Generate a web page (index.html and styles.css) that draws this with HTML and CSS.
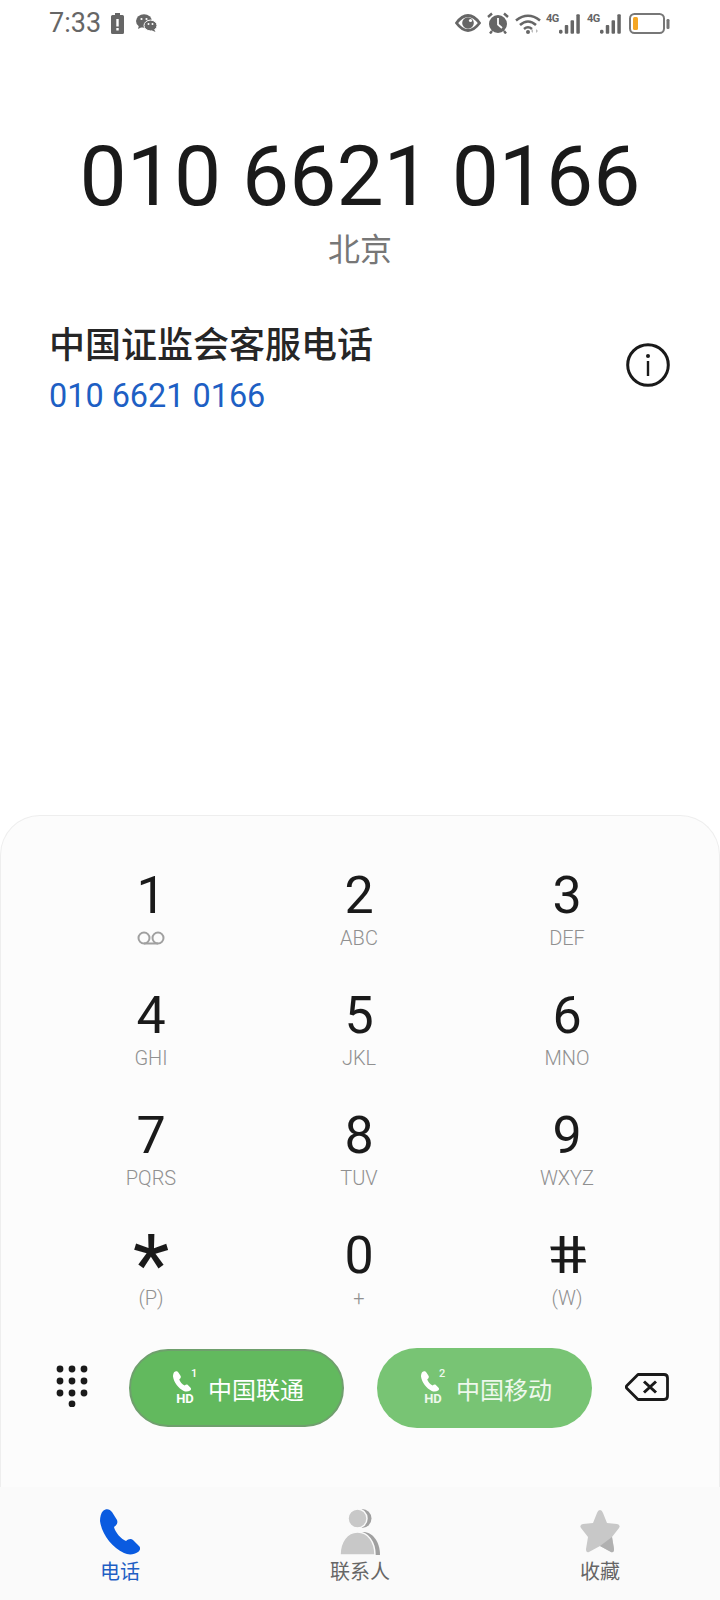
FILE: index.html
```html
<!DOCTYPE html>
<html>
<head>
    <title>Dialer</title>
    <link rel="stylesheet" href="styles.css">
</head>
<body>
    <div class="screen">
        <div class="status-bar">
            <div class="status-left">
                <span class="time">7:33</span>
                <svg class="ico-charge" viewBox="0 0 13 21"><path d="M4 0h5v2h2.500q1.500 0 1.500 1.500V19.500q0 1.500-1.500 1.500h-10Q0 21 0 19.500V3.500Q0 2 1.500 2H4z" fill="#666"/><rect x="5.300" y="6" width="2.400" height="7.500" fill="#fff"/><rect x="5.300" y="15" width="2.400" height="2.500" fill="#fff"/></svg>
                <svg class="ico-wechat" viewBox="0 0 21 18"><ellipse cx="8" cy="7" rx="8" ry="6.800" fill="#666"/><path d="M3 11l-1 4 5-2.500z" fill="#666"/><ellipse cx="14.500" cy="11.500" rx="6.500" ry="5.400" fill="#666" stroke="#fff" stroke-width="1"/><path d="M18 15l1.500 3-4.500-2z" fill="#666"/><circle cx="5.500" cy="5" r="1.100" fill="#fff"/><circle cx="10.500" cy="5" r="1.100" fill="#fff"/><circle cx="12.500" cy="10" r="1" fill="#fff"/><circle cx="16.500" cy="10" r="1" fill="#fff"/></svg>
            </div>
            <div class="status-right">
                <svg class="ico-eye" viewBox="0 0 26 18"><path d="M1.500 9Q7 1.500 13 1.500T24.500 9Q19 16.500 13 16.500T1.500 9z" fill="none" stroke="#666" stroke-width="2.800"/><circle cx="13" cy="9" r="5.800" fill="#666"/><circle cx="15.500" cy="6.500" r="1.600" fill="#fff"/></svg>
                <svg class="ico-alarm" viewBox="0 0 22 22"><circle cx="11" cy="12" r="9" fill="#666"/><path d="M11 6v6.500l4 3.500" fill="none" stroke="#fff" stroke-width="1.800"/><path d="M1 5l4-3.500M21 5l-4-3.500M5 19l-2 2.500M17 19l2 2.500" stroke="#666" stroke-width="2.400" fill="none"/></svg>
                <svg class="ico-wifi" viewBox="0 0 26 21"><path d="M1 7.500Q13-2 25 7.500" fill="none" stroke="#666" stroke-width="2.600"/><path d="M5 12Q13 5 21 12" fill="none" stroke="#666" stroke-width="2.600"/><path d="M9 16q4-3.500 8 0" fill="none" stroke="#666" stroke-width="2.400"/><circle cx="13" cy="19" r="2" fill="#666"/><path d="M18 16l-2 2 2 2zM21 16l2 2-2 2z" fill="#bbb"/></svg>
                <div class="signal">
                    <span class="net">4G</span>
                    <svg class="ico-bars" viewBox="0 0 22 20"><rect x="0" y="16" width="3.600" height="4" rx="1.500" fill="#666"/><rect x="6" y="11" width="3.600" height="9" rx="1" fill="#666"/><rect x="12" y="6" width="3.600" height="14" rx="1" fill="#666"/><rect x="18" y="0" width="3.600" height="20" rx="1" fill="#666"/></svg>
                </div>
                <div class="signal">
                    <span class="net">4G</span>
                    <svg class="ico-bars" viewBox="0 0 22 20"><rect x="0" y="16" width="3.600" height="4" rx="1.500" fill="#666"/><rect x="6" y="11" width="3.600" height="9" rx="1" fill="#666"/><rect x="12" y="6" width="3.600" height="14" rx="1" fill="#666"/><rect x="18" y="0" width="3.600" height="20" rx="1" fill="#666"/></svg>
                </div>
                <svg class="ico-battery" viewBox="0 0 41 21"><rect x="1" y="1" width="34" height="19" rx="4.500" fill="none" stroke="#777" stroke-width="2"/><rect x="4" y="4" width="5" height="13" rx="1.500" fill="#f5a623"/><rect x="37.500" y="6" width="3" height="10" rx="1.200" fill="#777"/></svg>
            </div>
        </div>

        <div class="number-box">
            <div class="number">010 6621 0166</div>
            <div class="region">北京</div>
        </div>

        <div class="contact">
            <div>
                <div class="contact-name">中国证监会客服电话</div>
                <div class="contact-number">010 6621 0166</div>
            </div>
            <svg class="ico-info" viewBox="0 0 44 44"><circle cx="22" cy="22" r="20.300" fill="none" stroke="#1a1a1a" stroke-width="3"/><circle cx="22" cy="13" r="2" fill="#1a1a1a"/><rect x="20.800" y="18" width="2.400" height="15" fill="#1a1a1a"/></svg>
        </div>

        <div class="panel">
            <div class="keypad">
                <div class="key"><span class="digit">1</span><svg class="ico-voicemail" viewBox="0 0 28 14"><circle cx="7" cy="7" r="5.500" fill="none" stroke="#a0a0a0" stroke-width="2"/><circle cx="21" cy="7" r="5.500" fill="none" stroke="#a0a0a0" stroke-width="2"/><path d="M7 12.500h14" stroke="#a0a0a0" stroke-width="2"/></svg></div>
                <div class="key"><span class="digit">2</span><span class="sub">ABC</span></div>
                <div class="key"><span class="digit">3</span><span class="sub">DEF</span></div>
                <div class="key"><span class="digit">4</span><span class="sub">GHI</span></div>
                <div class="key"><span class="digit">5</span><span class="sub">JKL</span></div>
                <div class="key"><span class="digit">6</span><span class="sub">MNO</span></div>
                <div class="key"><span class="digit">7</span><span class="sub">PQRS</span></div>
                <div class="key"><span class="digit">8</span><span class="sub">TUV</span></div>
                <div class="key"><span class="digit">9</span><span class="sub">WXYZ</span></div>
                <div class="key"><span class="digit star">*</span><span class="sub">(P)</span></div>
                <div class="key"><span class="digit">0</span><span class="sub">+</span></div>
                <div class="key"><span class="digit hash">#</span><span class="sub">(W)</span></div>
            </div>

            <div class="actions">
                <svg class="ico-dots" viewBox="0 0 32 42"><g fill="#1a1a1a"><circle cx="4" cy="4" r="3.400"/><circle cx="16" cy="4" r="3.400"/><circle cx="28" cy="4" r="3.400"/><circle cx="4" cy="16" r="3.400"/><circle cx="16" cy="16" r="3.400"/><circle cx="28" cy="16" r="3.400"/><circle cx="4" cy="28" r="3.400"/><circle cx="16" cy="28" r="3.400"/><circle cx="28" cy="28" r="3.400"/><circle cx="16" cy="39" r="3.400"/></g></svg>
                <button class="call call-1">
                    <span class="hd">
                        <span class="hd-top"><svg class="ico-handset" viewBox="0 0 40 46"><path d="M3 2C6-1 10 0 12 3L17 11C18 14 17 16 14 18C15 23 21 30 26 32C28 30 31 29 33 31L39 37C41 39 40 42 38 43C34 46 28 46 24 44C12 38 2 26 0 12C0 8 1 4 3 2Z" fill="#fff"/></svg><span class="sim">1</span></span>
                        <span class="hd-label">HD</span>
                    </span>
                    <span>中国联通</span>
                </button>
                <button class="call call-2">
                    <span class="hd">
                        <span class="hd-top"><svg class="ico-handset" viewBox="0 0 40 46"><path d="M3 2C6-1 10 0 12 3L17 11C18 14 17 16 14 18C15 23 21 30 26 32C28 30 31 29 33 31L39 37C41 39 40 42 38 43C34 46 28 46 24 44C12 38 2 26 0 12C0 8 1 4 3 2Z" fill="#fff"/></svg><span class="sim">2</span></span>
                        <span class="hd-label">HD</span>
                    </span>
                    <span>中国移动</span>
                </button>
                <svg class="ico-del" viewBox="0 0 44 28"><path d="M13 1.500H39Q42.500 1.500 42.500 5V23Q42.500 26.500 39 26.500H13L2 15.500Q0.500 14 2 12.500Z" fill="none" stroke="#1a1a1a" stroke-width="2.800" stroke-linejoin="round"/><path d="M19 8.500l12 11M31 8.500l-12 11" stroke="#1a1a1a" stroke-width="3"/></svg>
            </div>
        </div>

        <div class="tabs">
            <div class="tab tab-active">
                <svg class="ico-tab" viewBox="0 0 40 46"><path d="M3 2C6-1 10 0 12 3L17 11C18 14 17 16 14 18C15 23 21 30 26 32C28 30 31 29 33 31L39 37C41 39 40 42 38 43C34 46 28 46 24 44C12 38 2 26 0 12C0 8 1 4 3 2Z" fill="#0a5be0"/></svg>
                <span>电话</span>
            </div>
            <div class="tab">
                <svg class="ico-tab" viewBox="0 0 40 46"><circle cx="22" cy="9.500" r="9.500" fill="#a0a0a0"/><path d="M6 46C6 33 13 23 23 23S40 33 40 46z" fill="#a0a0a0"/><circle cx="17.500" cy="9.500" r="9.500" fill="#c8c8c8" stroke="#fafafa" stroke-width="1.500"/><path d="M0 46C0 33 7 23 17.500 23S35 33 35 46z" fill="#c8c8c8" stroke="#fafafa" stroke-width="1.500"/></svg>
                <span>联系人</span>
            </div>
            <div class="tab">
                <svg class="ico-tab" viewBox="0 0 40 46"><path d="M20 1Q22 1 23 4L27 14 37 15Q41 16 39 19L32 28 34 40Q34 44 31 43L20 37 9 43Q6 44 6 40L8 28 1 19Q-1 16 3 15L13 14 17 4Q18 1 20 1Z" fill="#c8c8c8"/><path d="M20 37L32 28 34 40Q34 44 31 43Z" fill="#b0b0b0"/></svg>
                <span>收藏</span>
            </div>
        </div>
    </div>
</body>
</html>
```

FILE: styles.css
```css
* {
    box-sizing: border-box;
}

body {
    margin: 0;
    background-color: #fff;
    font-family: Roboto, "Noto Sans CJK SC", sans-serif;
}

.screen {
    width: 720px;
    height: 1600px;
    display: flex;
    flex-direction: column;
    overflow: hidden;
}

/* status bar */
.status-bar {
    height: 46px;
    padding: 0 50px 0 49px;
    display: flex;
    justify-content: space-between;
    align-items: center;
    color: #666;
}

.status-left,
.status-right {
    display: flex;
    align-items: center;
}

.time {
    font-size: 27px;
    margin-right: 10px;
}

.ico-charge {
    width: 13px;
    height: 21px;
    margin-right: 12px;
}

.ico-wechat {
    width: 21px;
    height: 18px;
}

.ico-eye {
    width: 26px;
    height: 18px;
}

.ico-alarm {
    width: 22px;
    height: 22px;
    margin-left: 6px;
}

.ico-wifi {
    width: 26px;
    height: 21px;
    margin-left: 6px;
}

.signal {
    width: 34px;
    height: 22px;
    margin-left: 5px;
    display: flex;
    justify-content: space-between;
    align-items: flex-end;
}

.signal + .signal {
    margin-left: 7px;
}

.net {
    font-size: 11px;
    font-weight: 700;
    line-height: 11px;
    align-self: flex-start;
    margin-top: 1px;
    letter-spacing: -0.5px;
}

.ico-bars {
    width: 22px;
    height: 20px;
}

.ico-battery {
    width: 41px;
    height: 21px;
    margin-left: 8px;
}

/* number */
.number-box {
    height: 228px;
    padding-top: 85px;
    text-align: center;
}

.number {
    font-size: 84px;
    line-height: 92px;
    color: #1a1a1a;
}

.region {
    font-size: 32px;
    line-height: 44px;
    margin-top: 5px;
    color: #777;
}

.contact {
    height: 541px;
    padding: 46px 50px 0 49px;
    display: flex;
    justify-content: space-between;
    align-items: flex-start;
}

.contact-name {
    font-size: 36px;
    line-height: 52px;
    font-weight: 500;
    color: #262626;
}

.contact-number {
    font-size: 32.4px;
    line-height: 48px;
    color: #1e5fc4;
}

.ico-info {
    width: 44px;
    height: 44px;
    margin-top: 23px;
}

/* dial panel */
.panel {
    height: 672px;
    padding-top: 32px;
    background-color: #fcfcfc;
    border: 1px solid #eee;
    border-bottom: none;
    border-radius: 40px 40px 0 0;
}

.keypad {
    display: grid;
    grid-template-columns: repeat(3, 208px);
    grid-auto-rows: 120px;
    padding-left: 46px;
}

.key {
    display: flex;
    flex-direction: column;
    align-items: center;
    justify-content: center;
}

.digit {
    font-size: 52px;
    line-height: 60px;
    color: #1a1a1a;
}

.star {
    transform: translateY(10px) scale(1.62);
}

.hash {
    transform: scaleX(1.3) skewX(11deg);
}

.sub {
    font-size: 20px;
    line-height: 24px;
    font-weight: 300;
    color: #909090;
}

.ico-voicemail {
    width: 28px;
    height: 14px;
    margin: 5px 0;
}

.actions {
    height: 92px;
    margin-top: 20px;
    display: flex;
    align-items: flex-start;
}

.ico-dots {
    width: 32px;
    height: 42px;
    margin: 17px 0 0 55px;
}

.call {
    width: 215px;
    padding: 0 0 0 4px;
    border: none;
    border-radius: 40px;
    display: flex;
    align-items: center;
    justify-content: center;
    gap: 11px;
    font-family: inherit;
    font-size: 24px;
    color: #fff;
}

.call-1 {
    height: 78px;
    margin: 1px 0 0 41px;
    background-color: #62b95e;
    border: 2px solid #6f9f6d;
}

.call-2 {
    height: 80px;
    margin-left: 33px;
    background-color: #78c474;
    color: #eef8ec;
}

.hd {
    width: 24px;
    display: flex;
    flex-direction: column;
    align-items: center;
}

.hd-top {
    display: flex;
    align-items: flex-start;
}

.ico-handset {
    width: 18px;
    height: 21px;
}

.sim {
    font-size: 11px;
    font-weight: 500;
    line-height: 11px;
    margin-top: -3px;
}

.hd-label {
    font-size: 13px;
    line-height: 13px;
    font-weight: 700;
}

.ico-del {
    width: 44px;
    height: 28px;
    margin: 25px 0 0 33px;
}

/* bottom tabs */
.tabs {
    flex: 1;
    background-color: #fafafa;
    display: grid;
    grid-template-columns: repeat(3, 240px);
    padding-top: 22px;
}

.tab {
    display: flex;
    flex-direction: column;
    align-items: center;
    font-size: 20px;
    line-height: 28px;
    color: #666;
}

.tab-active {
    color: #1e5fc4;
}

.ico-tab {
    width: 40px;
    height: 46px;
    margin-bottom: 3px;
}
```
